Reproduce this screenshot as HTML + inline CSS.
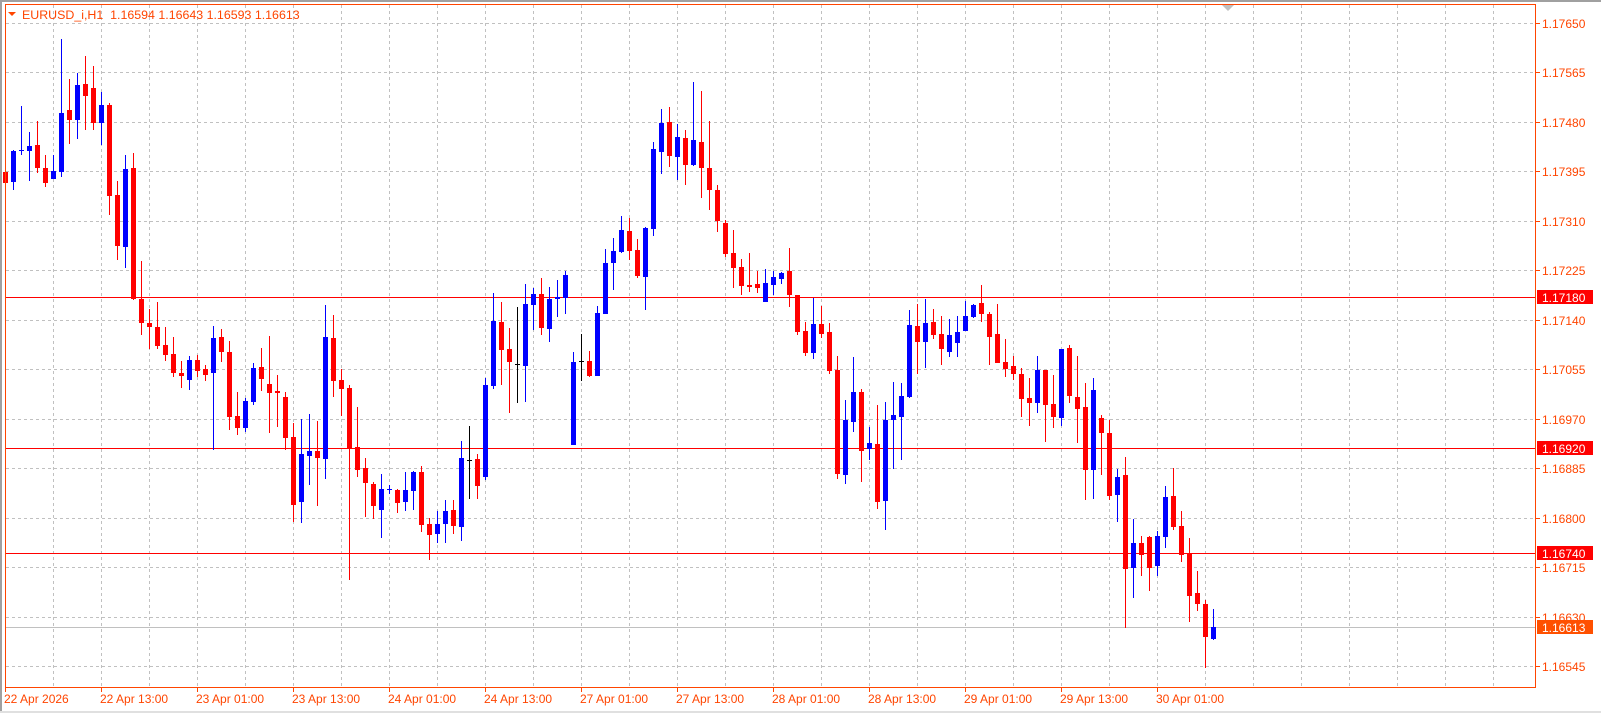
<!DOCTYPE html>
<html><head><meta charset="utf-8">
<style>
html,body{margin:0;padding:0;background:#fff;width:1601px;height:713px;overflow:hidden}
svg{display:block}
text{font-family:"Liberation Sans",sans-serif;font-size:12px}
</style></head>
<body>
<svg id="c" width="1601" height="713" xmlns="http://www.w3.org/2000/svg">
<rect x="0" y="0" width="1601" height="713" fill="#fff"/>
<rect x="0" y="0" width="1601" height="2" fill="#a0a0a0"/>
<rect x="0" y="0" width="2" height="713" fill="#a0a0a0"/>
<rect x="0" y="711" width="1601" height="2" fill="#e0e0e0"/>
<g id="grid"></g>
<g id="hl"></g>
<g id="cd"></g>
<rect x="5.5" y="4.5" width="1530" height="683" fill="none" stroke="#ff4500" stroke-width="1"/>
<polygon points="1222,5 1234,5 1228,11" fill="#c0c0c0"/>
<polygon points="8,12 16,12 12,16" fill="#ff4500"/>
<text x="22" y="19" fill="#ff4500" style="font-size:12.4px">EURUSD_i,H1&#160;&#160;1.16594 1.16643 1.16593 1.16613</text>
<g id="ax"></g>
</svg>
<script>
var NS="http://www.w3.org/2000/svg";
function el(p,t,a,txt){var e=document.createElementNS(NS,t);for(var k in a)e.setAttribute(k,a[k]);if(txt)e.textContent=txt;document.getElementById(p).appendChild(e);}
for(var x=53;x<=1493;x+=48)el("grid","line",{x1:x+.5,y1:5,x2:x+.5,y2:687,stroke:"#c0c0c0","stroke-dasharray":"3,3"});
var prices=["1.17650","1.17565","1.17480","1.17395","1.17310","1.17225","1.17140","1.17055","1.16970","1.16885","1.16800","1.16715","1.16630","1.16545"];
for(var k=0;k<14;k++){var y=Math.round(23+k*49.46)+.5;
 el("grid","line",{x1:6,y1:y,x2:1535,y2:y,stroke:"#c0c0c0","stroke-dasharray":"3,3"});
 el("ax","line",{x1:1535,y1:y,x2:1540,y2:y,stroke:"#ff4500"});
 el("ax","text",{x:1542,y:y+4.5,fill:"#ff4500"},prices[k]);}
var hls=[[297,"1.17180","#ff0000"],[448,"1.16920","#ff0000"],[553,"1.16740","#ff0000"],[627,"1.16613","#c0c0c0"]];
hls.forEach(function(h){el("hl","line",{x1:6,y1:h[0]+.5,x2:1535,y2:h[0]+.5,stroke:h[2]});});
var ds=[[5,"22 Apr 2026"],[101,"22 Apr 13:00"],[197,"23 Apr 01:00"],[293,"23 Apr 13:00"],[389,"24 Apr 01:00"],[485,"24 Apr 13:00"],[581,"27 Apr 01:00"],[677,"27 Apr 13:00"],[773,"28 Apr 01:00"],[869,"28 Apr 13:00"],[965,"29 Apr 01:00"],[1061,"29 Apr 13:00"],[1157,"30 Apr 01:00"]];
ds.forEach(function(d){el("ax","line",{x1:d[0]+.5,y1:687,x2:d[0]+.5,y2:692,stroke:"#ff4500"});el("ax","text",{x:d[0]-1,y:703,fill:"#ff4500"},d[1]);});
var C=`5 r 172 183 151 183
13 b 151 182 150 190
21 b 150 151 106 155
29 b 146 151 132 181
37 r 145 168 121 173
45 r 168 183 155 187
53 b 171 179 155 179
61 b 113 172 39 177
69 r 110 120 79 144
77 b 85 120 73 139
85 r 84 96 56 130
93 r 88 123 66 130
101 b 105 123 92 145
109 r 105 196 103 215
117 r 195 246 181 260
125 b 169 247 155 268
133 r 168 299 153 300
141 r 299 323 261 335
149 r 323 327 309 349
157 r 327 346 302 349
165 r 345 355 327 361
173 r 354 373 337 377
181 r 373 376 361 388
189 b 360 380 356 390
197 r 360 371 355 377
205 r 369 375 365 381
213 b 338 373 326 450
221 r 337 352 329 362
229 r 352 417 341 430
237 r 416 428 392 435
245 b 401 428 398 432
253 b 368 402 363 405
261 r 367 379 348 391
269 r 384 393 336 433
277 r 391 393 375 427
285 r 397 438 392 450
293 r 437 505 423 522
301 b 454 502 419 523
309 b 451 456 414 485
317 r 451 458 421 506
325 b 337 459 305 479
333 r 338 381 315 397
341 r 380 389 369 416
349 r 388 448 385 580
357 r 447 470 407 477
365 r 468 483 458 517
373 r 484 506 482 519
381 b 489 510 474 538
389 b 489 490 485 494
397 r 490 503 489 513
405 b 490 502 472 511
413 b 472 491 471 510
421 r 472 525 466 532
429 r 524 535 518 560
437 b 524 534 511 543
445 b 511 524 500 543
453 r 510 526 500 534
461 b 458 527 441 541
469 k 460 460 426 499
477 r 459 486 454 499
485 b 385 477 378 480
493 b 321 386 293 389
501 r 322 350 302 385
509 r 349 362 328 413
517 k 364 364 307 403
525 b 304 366 284 402
533 b 294 305 288 330
541 r 294 328 278 335
549 b 299 329 287 342
557 b 297 299 280 317
565 b 275 298 271 314
573 b 362 445 352 445
581 k 361 361 334 381
589 r 361 376 351 377
597 b 313 376 306 376
605 b 263 314 249 314
613 b 251 263 238 290
621 b 230 252 216 253
629 r 231 251 218 260
637 r 250 276 239 278
645 b 228 277 227 310
653 b 149 229 142 236
661 b 123 152 109 174
669 r 122 156 107 167
677 b 137 157 124 180
685 r 138 165 130 185
693 b 140 165 82 166
701 r 142 168 91 198
709 r 168 190 121 210
717 r 190 221 185 232
725 r 223 254 220 257
733 r 253 268 230 288
741 r 267 286 259 295
749 r 285 287 253 292
757 r 284 288 271 293
765 b 283 302 269 302
773 b 277 285 271 295
781 b 273 279 272 284
789 r 271 295 248 307
797 r 295 332 295 335
805 r 331 353 322 356
813 b 324 353 298 359
821 r 324 334 306 338
829 r 332 371 323 374
837 r 370 474 356 479
845 b 420 475 400 484
853 b 392 422 357 432
861 r 392 451 389 482
869 b 443 449 427 460
877 r 444 502 405 509
885 b 420 501 402 530
893 b 415 420 382 469
901 b 396 417 383 460
909 b 325 397 310 398
917 r 326 342 304 374
925 b 323 342 299 368
933 r 322 335 309 339
941 r 334 349 316 365
949 b 335 352 319 357
957 b 332 343 316 357
965 b 316 331 301 331
973 b 305 317 304 318
981 r 303 314 285 322
989 r 314 337 312 365
997 r 334 363 304 363
1005 r 362 369 339 377
1013 r 366 374 356 380
1021 r 374 399 368 417
1029 r 398 403 378 426
1037 b 370 403 356 413
1045 r 370 405 370 442
1053 r 404 417 375 428
1061 b 349 418 349 426
1069 r 348 396 345 403
1077 r 397 409 356 443
1085 r 407 470 383 500
1093 b 390 470 378 499
1101 r 418 433 415 475
1109 r 433 496 420 500
1117 b 477 495 469 522
1125 r 475 569 457 628
1133 b 543 568 519 598
1141 r 543 555 536 576
1149 r 537 568 536 591
1157 b 536 566 531 576
1165 b 497 537 486 548
1173 r 496 527 468 530
1181 r 526 555 511 562
1189 r 553 596 538 622
1197 r 593 604 571 611
1205 r 604 637 600 668
1213 b 627 639 609 640`;
var col={r:"#ff0000",b:"#0000ff",k:"#000000"};
C.split("\n").forEach(function(l){var p=l.trim().split(/\s+/);var x=+p[0],c=col[p[1]],bt=+p[2],bb=+p[3],wt=+p[4],wb=+p[5];
 el("cd","rect",{x:x,y:wt,width:1,height:Math.max(1,wb-wt),fill:c});
 if(p[1]=="k"){el("cd","rect",{x:x-2,y:bt,width:5,height:1,fill:c});}
 else el("cd","rect",{x:x-2,y:bt,width:5,height:Math.max(1,bb-bt),fill:c});});
hls.forEach(function(h){var bg=h[2]=="#c0c0c0"?"#ff5000":"#ff0000";
 el("ax","rect",{x:1537,y:h[0]-7,width:56,height:14,fill:bg});
 el("ax","text",{x:1542,y:h[0]+5,fill:"#ffffff"},h[1]);});
</script>
</body></html>
